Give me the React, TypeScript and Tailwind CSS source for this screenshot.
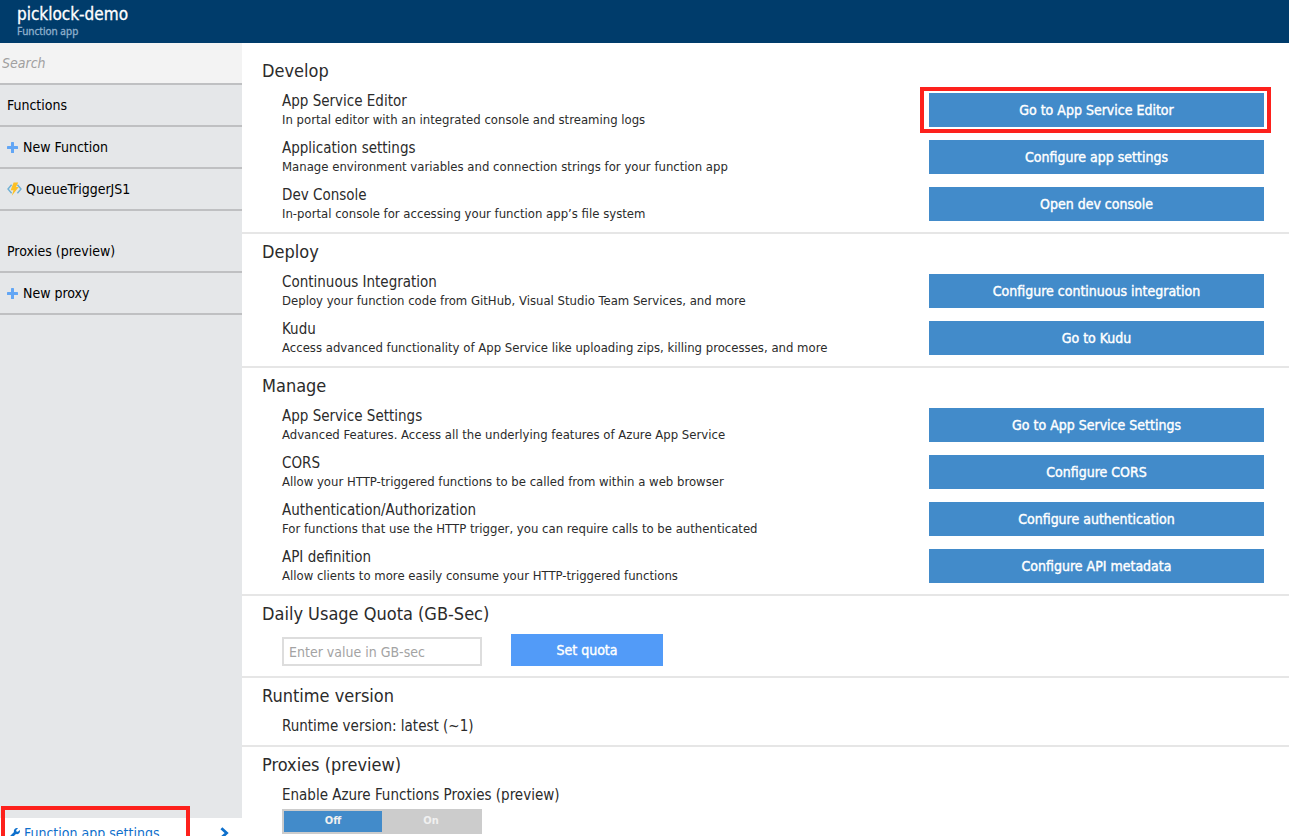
import { useState } from "react";
import { FaWrench } from "react-icons/fa";

type Item = { title: string; text: string; action: string; marked?: boolean };

const develop: Item[] = [
  { title: "App Service Editor", text: "In portal editor with an integrated console and streaming logs", action: "Go to App Service Editor", marked: true },
  { title: "Application settings", text: "Manage environment variables and connection strings for your function app", action: "Configure app settings" },
  { title: "Dev Console", text: "In-portal console for accessing your function app’s file system", action: "Open dev console" },
];

const deploy: Item[] = [
  { title: "Continuous Integration", text: "Deploy your function code from GitHub, Visual Studio Team Services, and more", action: "Configure continuous integration" },
  { title: "Kudu", text: "Access advanced functionality of App Service like uploading zips, killing processes, and more", action: "Go to Kudu" },
];

const manage: Item[] = [
  { title: "App Service Settings", text: "Advanced Features. Access all the underlying features of Azure App Service", action: "Go to App Service Settings" },
  { title: "CORS", text: "Allow your HTTP-triggered functions to be called from within a web browser", action: "Configure CORS" },
  { title: "Authentication/Authorization", text: "For functions that use the HTTP trigger, you can require calls to be authenticated", action: "Configure authentication" },
  { title: "API definition", text: "Allow clients to more easily consume your HTTP-triggered functions", action: "Configure API metadata" },
];

function Heading({ children }: { children: React.ReactNode }) {
  return <h2 className="pl-5 text-[18px] leading-9">{children}</h2>;
}

function ActionSection({ title, items }: { title: string; items: Item[] }) {
  return (
    <section className="border-b-2 border-[#e6e6e6] pb-[11px]">
      <Heading>{title}</Heading>
      <ul className="flex flex-col gap-[13px] pt-1">
        {items.map((item) => (
          <li key={item.title} className="flex h-[34px] justify-between pl-10 pr-[25px]">
            <div>
              <h3 className="text-[15px] leading-4">{item.title}</h3>
              <p className="text-[13px] leading-[22px]">{item.text}</p>
            </div>
            <div className="relative flex w-[335px] shrink-0">
              <button className="flex-1 bg-[#428bca] text-[14px] text-white [-webkit-text-stroke:0.4px_white]">{item.action}</button>
              {item.marked && <span className="pointer-events-none absolute -top-1.5 -bottom-1.5 -left-[9px] -right-[7px] border-4 border-[#fd211c]" />}
            </div>
          </li>
        ))}
      </ul>
    </section>
  );
}

function PlusIcon() {
  return (
    <svg viewBox="0 0 11 11" className="mr-[5px] h-[11px] w-[11px]" fill="#62a6f5" aria-hidden="true">
      <rect x="4" y="0" width="3" height="11" rx="0.6" />
      <rect x="0" y="4" width="11" height="3" rx="0.6" />
    </svg>
  );
}

function FunctionIcon() {
  return (
    <svg viewBox="0 0 15 14" className="h-[14px] w-[15px]" fill="none" aria-hidden="true">
      <path d="M4.6 2.8 1 7l3.6 4.2M10.4 2.8 14 7l-3.6 4.2" stroke="#6fb0d4" strokeWidth="1.4" />
      <path d="M6.6 0.4h4.6L9 5h2.8L4.8 13.8 6.5 8.2H3.6z" fill="#fcc025" />
    </svg>
  );
}

function ChevronIcon() {
  return (
    <svg viewBox="0 0 9 12" className="h-3 w-[9px]" fill="none" aria-hidden="true">
      <path d="M1.4 1.2 6.6 6l-5.2 4.8" stroke="currentColor" strokeWidth="2.8" />
    </svg>
  );
}

const sideRow = "flex h-[42px] w-full items-center border-b-2 border-[#bfc0c2] pl-[7px] text-left text-[14px]";

export default function App() {
  const [enabled, setEnabled] = useState(false);
  return (
    <div className="flex h-screen flex-col overflow-hidden bg-white font-['DejaVu_Sans_Condensed','DejaVu_Sans',sans-serif] text-[#2b2b2b]">
      <header className="h-[43px] shrink-0 bg-[#003c6b] pl-[17px] pt-1 text-white">
        <h1 className="text-[17px] leading-5 [-webkit-text-stroke:0.3px_white]">picklock-demo</h1>
        <p className="font-['Noto_Sans',sans-serif] text-[10px] leading-[15px] text-[#8fb0cc] [-webkit-text-stroke:0.3px_#8fb0cc]">Function app</p>
      </header>
      <div className="flex h-[calc(100vh-19px)] shrink-0">
        <nav className="flex w-[242px] shrink-0 flex-col bg-[#e5e7e9] text-black">
          <input type="search" aria-label="Search" placeholder="Search" className="h-[42px] w-full border-b-2 border-[#bfc0c2] bg-[#f3f3f3] pl-0.5 text-[14px] italic outline-none placeholder:text-[#a0a0a0]" />
          <h2 className={sideRow}>Functions</h2>
          <button className={sideRow}>
            <PlusIcon />
            New Function
          </button>
          <button className={sideRow}>
            <FunctionIcon />
            <span className="pl-1">QueueTriggerJS1</span>
          </button>
          <h2 className={`${sideRow} mt-5`}>Proxies (preview)</h2>
          <button className={sideRow}>
            <PlusIcon />
            New proxy
          </button>
          <div className="relative mt-auto h-[42px] bg-white text-[#0f70cc]">
            <a href="#settings" className="flex items-center justify-between pl-[9px] pr-[13px] pt-[3px] text-[14px] leading-6">
              <span className="flex items-center gap-1">
                <FaWrench className="size-[11px]" />
                Function app settings
              </span>
              <ChevronIcon />
            </a>
            <span className="pointer-events-none absolute -top-3 left-px h-[50px] w-[189px] border-4 border-[#fd211c]" />
          </div>
        </nav>
        <main className="min-w-0 flex-1 pt-2.5">
          <ActionSection title="Develop" items={develop} />
          <ActionSection title="Deploy" items={deploy} />
          <ActionSection title="Manage" items={manage} />
          <section className="border-b-2 border-[#e6e6e6] pb-2.5">
            <Heading>Daily Usage Quota (GB-Sec)</Heading>
            <div className="flex items-end gap-[29px] pl-10 pt-0.5">
              <input type="text" aria-label="Daily usage quota" placeholder="Enter value in GB-sec" className="h-[29px] w-[200px] border-2 border-[#dddddd] px-[5px] text-[14px] outline-none placeholder:text-[#a3a3a3]" />
              <button className="h-8 w-[152px] bg-[#529bf8] text-[14px] text-white [-webkit-text-stroke:0.4px_white]">Set quota</button>
            </div>
          </section>
          <section className="border-b-2 border-[#e6e6e6] pb-[7px]">
            <Heading>Runtime version</Heading>
            <p className="pl-10 text-[15px] leading-6">Runtime version: latest (~1)</p>
          </section>
          <section>
            <Heading>Proxies (preview)</Heading>
            <p className="pl-10 text-[15px] leading-6">Enable Azure Functions Proxies (preview)</p>
            <div className="ml-10 mt-0.5 flex h-[25px] w-[200px] border-2 border-[#cccccc] bg-[#cccccc] text-[11px] font-bold text-[#f0f0f0]">
              <button aria-pressed={!enabled} onClick={() => setEnabled(false)} className="flex-1 aria-pressed:bg-[#428bca]">Off</button>
              <button aria-pressed={enabled} onClick={() => setEnabled(true)} className="flex-1 aria-pressed:bg-[#428bca]">On</button>
            </div>
          </section>
        </main>
      </div>
    </div>
  );
}
